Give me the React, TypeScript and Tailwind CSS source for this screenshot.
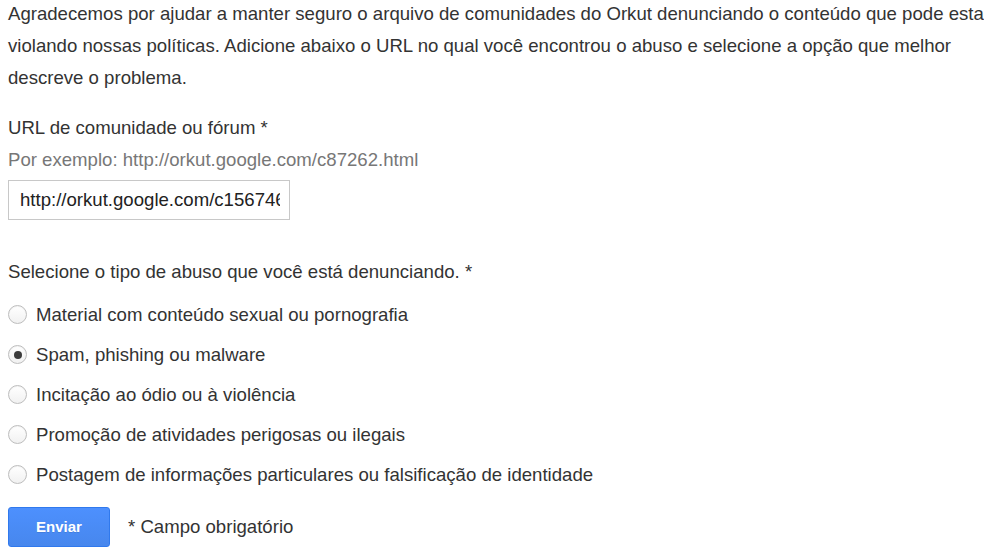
import React from 'react';

const options = [
  'Material com conteúdo sexual ou pornografia',
  'Spam, phishing ou malware',
  'Incitação ao ódio ou à violência',
  'Promoção de atividades perigosas ou ilegais',
  'Postagem de informações particulares ou falsificação de identidade',
];

const Radio: React.FC<{ checked?: boolean }> = ({ checked }) => (
  <span className="flex h-[19px] w-[19px] shrink-0 items-center justify-center rounded-full border border-[#bdbdbd] bg-gradient-to-b from-white to-[#f1f1f1] shadow-[inset_0_1px_1px_rgba(0,0,0,0.05)]">
    {checked && <span className="h-[8px] w-[8px] rounded-full bg-[#3c3c3c]" />}
  </span>
);

export default function App() {
  return (
    <div className="h-[552px] w-[984px] overflow-hidden bg-white font-['Liberation_Sans',Arial,sans-serif] text-[18.6px] text-[#333]">
      <div className="w-[1030px] pl-[8px]">
        {/* Intro text */}
        <p className="-mt-[2px] leading-[32px]">
          Agradecemos por ajudar a manter seguro o arquivo de comunidades do Orkut denunciando o conteúdo que pode estar
          violando nossas políticas. Adicione abaixo o URL no qual você encontrou o abuso e selecione a opção que melhor
          descreve o problema.
        </p>

        {/* URL field */}
        <div className="mt-[18px] leading-[32px]">URL de comunidade ou fórum *</div>
        <div className="leading-[32px] text-[#777]">Por exemplo: http://orkut.google.com/c87262.html</div>
        <input
          readOnly
          value="http://orkut.google.com/c156746.html"
          className="mt-[4px] h-[40px] w-[282px] border border-[#c8c8c8] bg-white pl-[11px] pr-[9px] text-[18.6px] text-[#222] outline-none"
        />

        {/* Abuse type */}
        <div className="mt-[36px] leading-[32px]">Selecione o tipo de abuso que você está denunciando. *</div>
        <div className="mt-[17px] flex flex-col gap-[21px]">
          {options.map((o, i) => (
            <label key={o} className="flex h-[19px] items-center gap-[9px] whitespace-nowrap">
              <Radio checked={i === 1} />
              <span>{o}</span>
            </label>
          ))}
        </div>

        {/* Submit */}
        <div className="mt-[23px] flex items-center gap-[18px]">
          <button className="h-[40px] w-[102px] rounded-[3px] border border-[#3079ed] bg-gradient-to-b from-[#4d90fe] to-[#4787ed] text-[15px] font-bold text-white [text-shadow:0_1px_rgba(0,0,0,0.1)]">
            Enviar
          </button>
          <span>* Campo obrigatório</span>
        </div>
      </div>
    </div>
  );
}
